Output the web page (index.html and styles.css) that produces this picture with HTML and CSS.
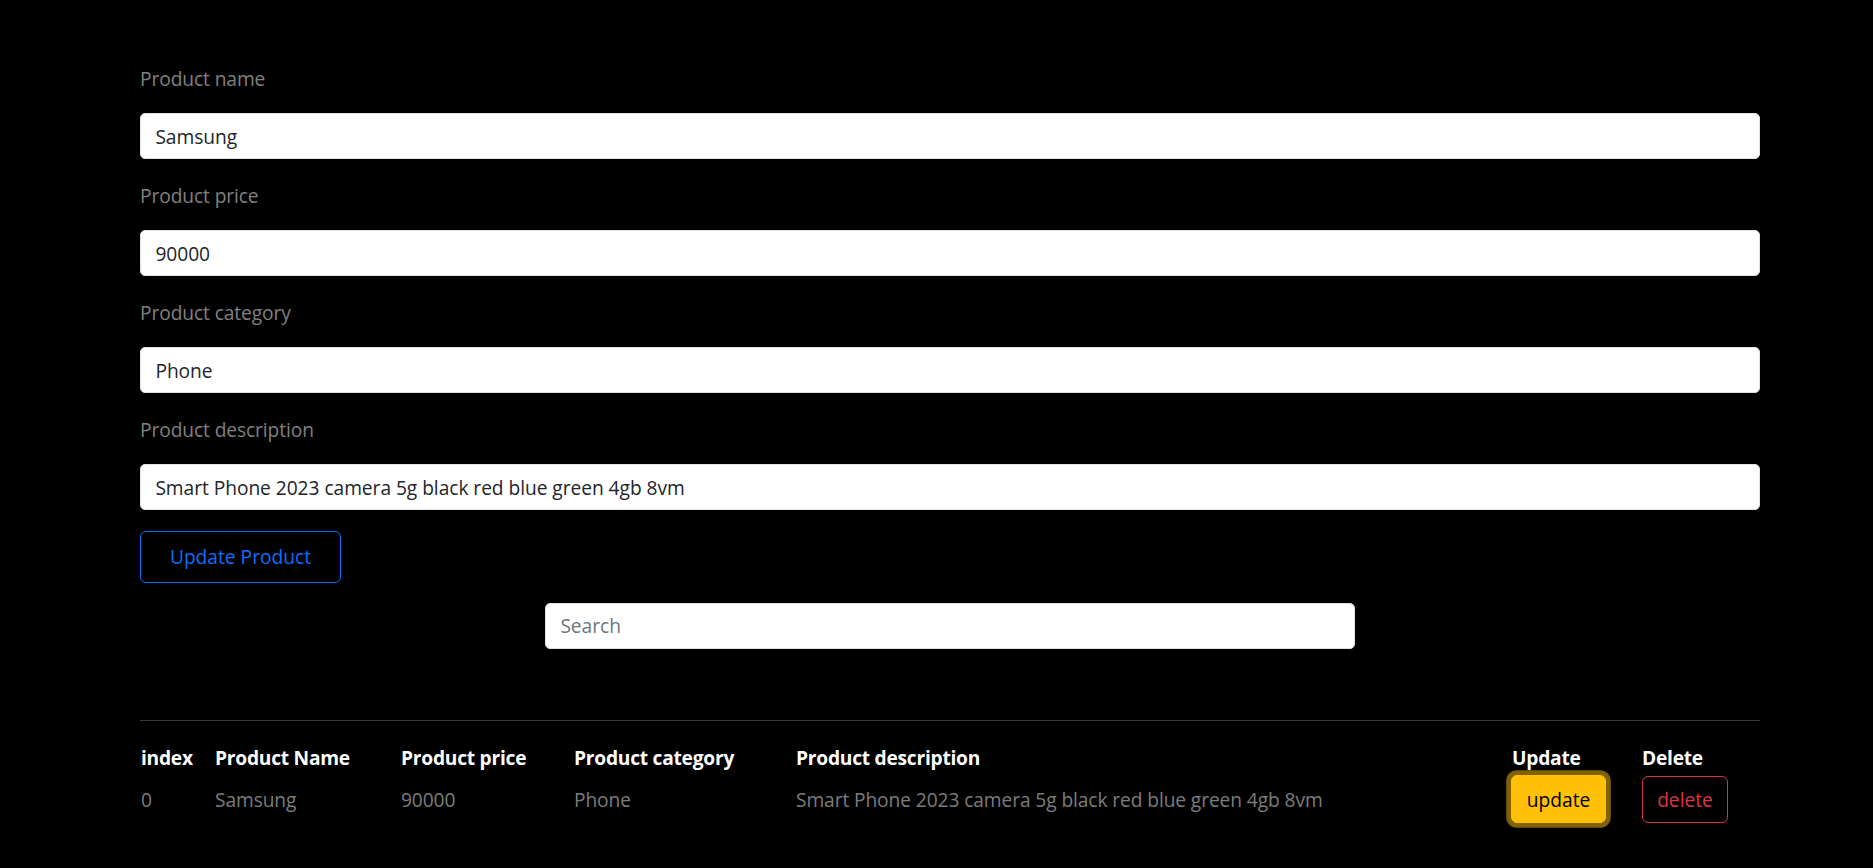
FILE: index.html
```html
<!DOCTYPE html>
<html lang="en">
<head>
<meta charset="utf-8">
<title>Products</title>
<link rel="stylesheet" href="styles.css">
</head>
<body>
<div class="container">
  <form class="product-form">
    <div class="field">
      <label class="field-label" for="pname">Product name</label>
      <input class="field-input" id="pname" type="text" value="Samsung">
    </div>
    <div class="field">
      <label class="field-label" for="pprice">Product price</label>
      <input class="field-input" id="pprice" type="text" value="90000">
    </div>
    <div class="field">
      <label class="field-label" for="pcat">Product category</label>
      <input class="field-input" id="pcat" type="text" value="Phone">
    </div>
    <div class="field">
      <label class="field-label" for="pdesc">Product description</label>
      <input class="field-input" id="pdesc" type="text" value="Smart Phone 2023 camera 5g black red blue green 4gb 8vm">
    </div>
    <button type="button" class="btn-outline-primary">Update Product</button>
  </form>

  <div class="search-wrap">
    <input class="field-input search-input" type="text" placeholder="Search">
  </div>

  <div class="divider"></div>

  <table class="product-table">
    <colgroup>
      <col class="c-index">
      <col class="c-name">
      <col class="c-price">
      <col class="c-cat">
      <col class="c-desc">
      <col class="c-upd">
      <col class="c-del">
    </colgroup>
    <thead>
      <tr>
        <th>index</th>
        <th>Product Name</th>
        <th>Product price</th>
        <th>Product category</th>
        <th>Product description</th>
        <th>Update</th>
        <th>Delete</th>
      </tr>
    </thead>
    <tbody>
      <tr>
        <td>0</td>
        <td>Samsung</td>
        <td>90000</td>
        <td>Phone</td>
        <td>Smart Phone 2023 camera 5g black red blue green 4gb 8vm</td>
        <td><button type="button" class="btn-warning">update</button></td>
        <td><button type="button" class="btn-outline-danger">delete</button></td>
      </tr>
    </tbody>
  </table>
</div>
</body>
</html>
```

FILE: styles.css
```css
* { box-sizing: border-box; }

html, body {
  margin: 0;
  background: #000;
}

body {
  font-family: "Open Sans", "Noto Sans", "Liberation Sans", sans-serif;
  font-size: 19.2px;
  line-height: 29px;
  color: #fff;
  height: 868px;
  overflow: hidden;
}

.container {
  width: 1620px;
  margin-left: 140px;
  padding-top: 64px;
}

.product-form {
  display: flex;
  flex-direction: column;
  align-items: flex-start;
}

.field {
  display: flex;
  flex-direction: column;
  width: 100%;
  margin-bottom: 22px;
}

.field:last-of-type {
  margin-bottom: 20.5px;
}

.field-label {
  color: #808080;
  margin-bottom: 20px;
  letter-spacing: -0.1px;
}

.field-input {
  width: 100%;
  height: 46px;
  border: 1px solid #dee2e6;
  border-radius: 5px;
  background: #fff;
  color: #212529;
  font-family: inherit;
  font-size: 19.2px;
  letter-spacing: -0.05px;
  padding: 0 14.4px;
  outline: none;
}

.field-input::placeholder {
  color: #6c757d;
}

.btn-outline-primary {
  height: 52px;
  width: 201px;
  background: transparent;
  border: 1.2px solid #0d6efd;
  border-radius: 6px;
  color: #0d6efd;
  font-family: inherit;
  font-size: 19.2px;
  padding: 0;
}

.search-wrap {
  display: flex;
  justify-content: center;
  margin-top: 20px;
}

.search-input {
  width: 810px;
}

.divider {
  margin-top: 71px;
  border-top: 1px solid #3a3a3a;
}

.product-table {
  width: 100%;
  table-layout: fixed;
  border-collapse: collapse;
  margin-top: 22.5px;
}

.c-index { width: 74px; }
.c-name { width: 186px; }
.c-price { width: 173px; }
.c-cat { width: 222px; }
.c-desc { width: 716px; }
.c-upd { width: 130px; }
.c-del { width: 119px; }

.product-table th {
  text-align: left;
  font-weight: 700;
  color: #fff;
  padding: 0 0 0 1px;
  height: 29px;
  white-space: nowrap;
  letter-spacing: -0.25px;
}

.product-table td {
  color: #7c7c7c;
  padding: 0 0 0 1px;
  height: 54px;
  vertical-align: middle;
  white-space: nowrap;
  letter-spacing: -0.1px;
}

.btn-warning {
  width: 95px;
  height: 48px;
  background: #ffc107;
  border: 1.2px solid #ffc107;
  border-radius: 6px;
  color: #000;
  font-family: inherit;
  font-size: 19.2px;
  padding: 0;
  box-shadow: 0 0 0 4.8px rgba(255, 193, 7, 0.5);
  margin-left: -1px;
}

.btn-outline-danger {
  width: 86px;
  height: 47px;
  background: transparent;
  border: 1.2px solid #dc3545;
  border-radius: 6px;
  color: #dc3545;
  font-family: inherit;
  font-size: 19.2px;
  padding: 0;
}
```
